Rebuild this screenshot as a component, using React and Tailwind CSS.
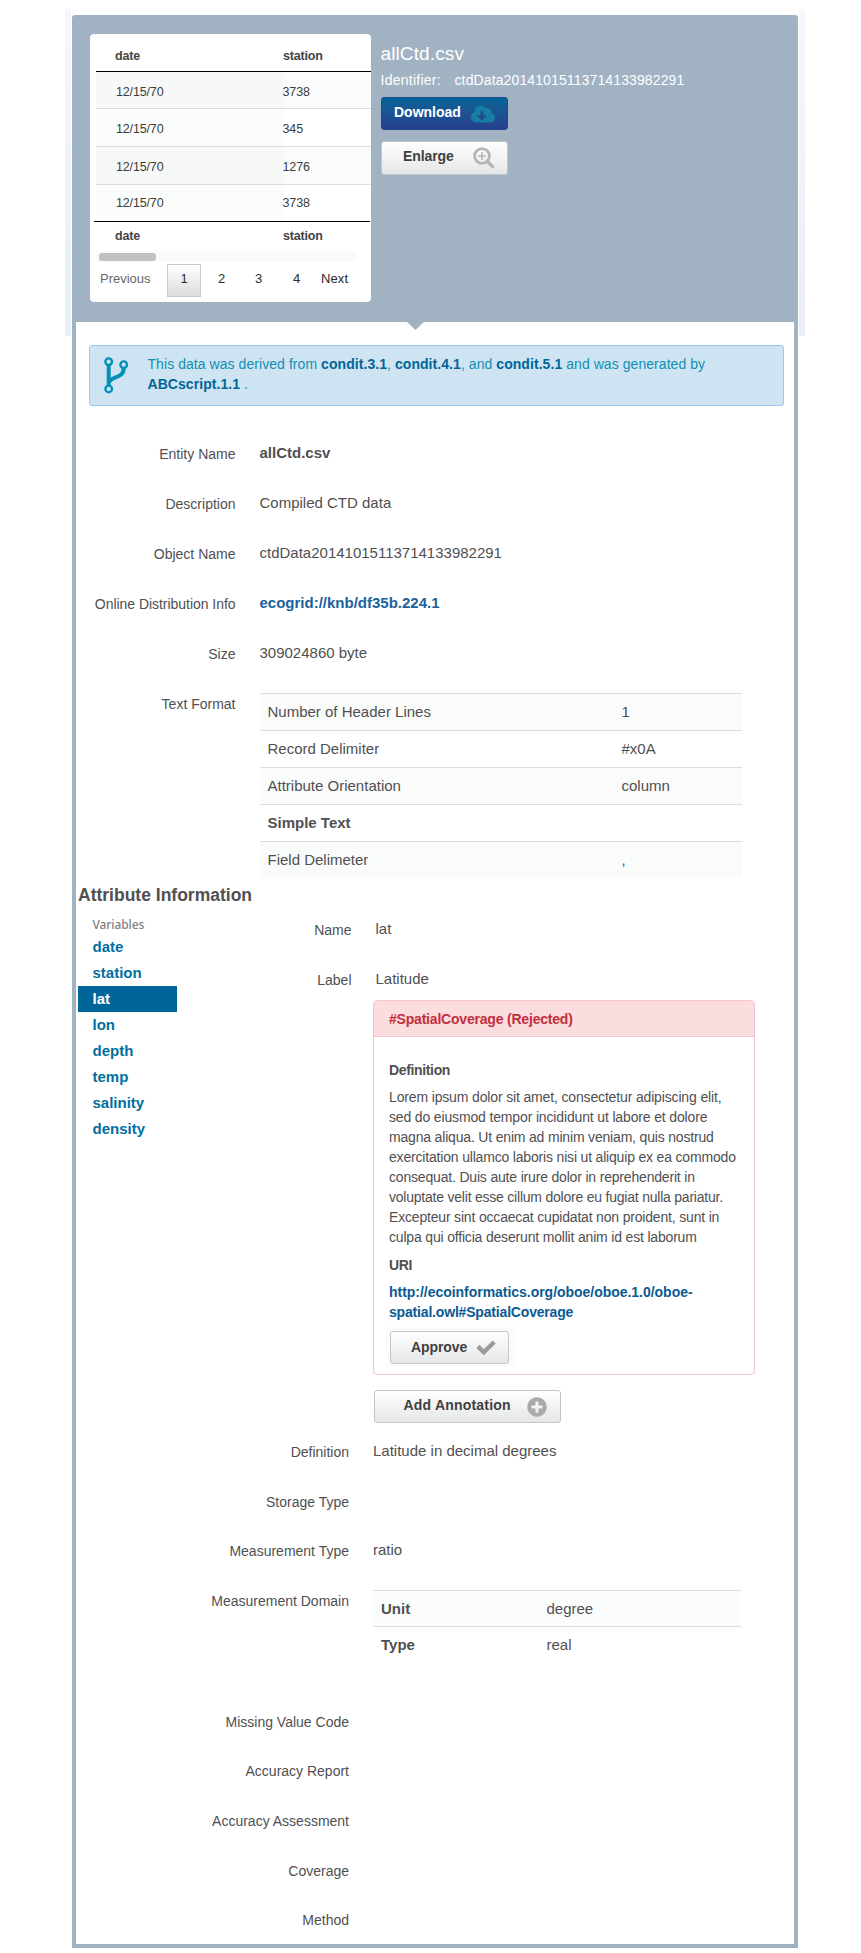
import React from "react";
import { FaCloudDownloadAlt, FaPlusCircle } from "react-icons/fa";

const previewRows = [
  ["12/15/70", "3738"],
  ["12/15/70", "345"],
  ["12/15/70", "1276"],
  ["12/15/70", "3738"],
];

const formatRows = [
  ["Number of Header Lines", "1"],
  ["Record Delimiter", "#x0A"],
  ["Attribute Orientation", "column"],
  ["Simple Text", ""],
  ["Field Delimeter", ","],
];

const variables = ["date", "station", "lat", "lon", "depth", "temp", "salinity", "density"];

function BranchIcon() {
  return (
    <svg className="mt-[11px] ml-[14px] h-[38px] w-[26px] shrink-0" viewBox="0 0 26 38" fill="none" stroke="#0590b5">
      <circle cx="4.7" cy="4.7" r="3.3" strokeWidth="2.4" />
      <circle cx="19.7" cy="7.7" r="3.3" strokeWidth="2.4" />
      <circle cx="4.7" cy="31.9" r="3.3" strokeWidth="2.4" />
      <path d="M4.7 8.3V28.3" strokeWidth="4" />
      <path d="M19.7 11.2C19.7 21.5 8 19 5 25" strokeWidth="4" />
    </svg>
  );
}

function ZoomIcon() {
  return (
    <svg className="h-[22px] w-[22px]" viewBox="0 0 22 22" fill="none" stroke="#b4b6b6">
      <circle cx="9" cy="9" r="7.4" strokeWidth="2.8" />
      <path d="M14.3 14.3L19.6 19.6" strokeWidth="3.4" strokeLinecap="round" />
      <path d="M9 5V13M5 9H13" strokeWidth="1.6" />
    </svg>
  );
}

function CheckIcon() {
  return (
    <svg className="h-[16px] w-[20px]" viewBox="0 0 20 16" fill="none" stroke="#999b9b" strokeWidth="4.4">
      <path d="M1.9 6.4L7.8 12.2L18.2 2" />
    </svg>
  );
}

function Row({ label, labelClass = "w-[159.5px] mr-[24px]", height = "h-[50px]", children }) {
  return (
    <div className={`flex items-start ${height}`}>
      <div className={`mt-px shrink-0 text-right text-[14px] leading-5 ${labelClass}`}>{label}</div>
      <div className="text-[15px] leading-5">{children}</div>
    </div>
  );
}

function DetailRow(props) {
  return <Row labelClass="w-[172px] mr-[24px]" {...props} />;
}

const greyButton =
  "flex items-center rounded-[3px] border border-[#c4c6c6] bg-linear-to-b from-white to-[#e5e6e7] text-left text-[14px] font-bold text-[#3f3f3f]";

function Preview() {
  return (
    <div className="h-[268px] w-[281px] overflow-hidden rounded-[4px] bg-white pt-[8px] pl-[6px] text-[12.5px] text-[#444]">
      <div className="flex h-[29px] leading-[28px] font-bold">
        <div className="w-[187px] pl-[19px] tracking-[-0.15px]">date</div>
        <div className="tracking-[-0.2px]">station</div>
      </div>
      <div className="border-t border-black">
        {previewRows.map(([date, station], i) => (
          <div
            key={i}
            className={`flex text-[#3c3c3c] ${i === 3 ? "h-[36px] leading-[37px]" : i === 0 ? "h-[37px] border-b border-[#ddd] leading-[40px]" : "h-[38px] border-b border-[#ddd] leading-[40px]"} ${i % 2 ? "" : "bg-[#fafcfb]"}`}
          >
            <div className={`w-[187px] pl-[20px] tracking-[-0.15px] ${i % 2 ? "bg-[#fbfdfc]" : "bg-[#f7f9f8]"}`}>{date}</div>
            <div className="-ml-[0.5px] tracking-[-0.1px]">{station}</div>
          </div>
        ))}
      </div>
      <div className="-ml-[2px] mr-px flex h-[30px] border-t border-black leading-[28px] font-bold">
        <div className="w-[189px] pl-[21px] tracking-[-0.15px]">date</div>
        <div className="tracking-[-0.2px]">station</div>
      </div>
      <div className="mr-[14px] h-[11px] bg-[#fafafa] pt-[2px] pl-[3px]">
        <div className="h-[8px] w-[57px] rounded-[3px] bg-[#c1c1c1]" />
      </div>
      <div className="mt-[2px] flex h-[33px] text-[13px] leading-[30px] text-[#2b2b2b]">
        <div className="w-[71px] pl-[4px] text-[#666]">Previous</div>
        <div className="w-[34px] border border-[#cacaca] bg-linear-to-b from-white to-[#dcdcdc] text-center leading-[28px]">1</div>
        <div className="ml-[17px] w-[37px]">2</div>
        <div className="w-[38px]">3</div>
        <div className="w-[28px]">4</div>
        <div className="tracking-[0.1px]">Next</div>
      </div>
    </div>
  );
}

function Header() {
  return (
    <header className="flex h-[307px] w-[726px] rounded-t-[3px] bg-[#a1b3c3] pt-[19px] pl-[18px]">
      <Preview />
      <div className="ml-[10px] text-white">
        <h1 className="mt-[8px] -ml-[0.5px] text-[19px] leading-6 tracking-[0.12px]">allCtd.csv</h1>
        <div className="mt-[4px] -ml-[0.5px] flex text-[14px] leading-5">
          <span className="w-[74px] tracking-[0.25px]">Identifier:</span>
          <span className="tracking-[0.12px]">ctdData20141015113714133982291</span>
        </div>
        <button className="mt-[7px] flex h-[33px] w-[127px] items-center rounded-[3px] border border-[#1e4689] bg-linear-to-b from-[#006498] to-[#263f8c] pl-[12px] text-left text-[14px] font-bold">
          <span className="-mt-[2px] w-[77px]">Download</span>
          <FaCloudDownloadAlt className="h-[22px] w-[24px] text-[#177fa3]" />
        </button>
        <button className={`${greyButton} mt-[11px] h-[34px] w-[127px] pl-[21px]`}>
          <span className="-mt-[3px] w-[70px] tracking-[-0.1px]">Enlarge</span>
          <ZoomIcon />
        </button>
      </div>
    </header>
  );
}

function Annotation() {
  return (
    <section className="h-[375px] w-[382px] overflow-hidden rounded-[4px] border border-[#f5c6cf]">
      <h3 className="h-[36px] border-b border-[#f5c6cf] bg-[#fbdcdf] pl-[15px] text-[14px] leading-[36px] font-bold tracking-[-0.2px] text-[#c22f3c]">
        #SpatialCoverage (Rejected)
      </h3>
      <div className="pt-[23px] pl-[15px] text-[14px] leading-5 text-[#505052]">
        <h4 className="font-bold tracking-[-0.35px]">Definition</h4>
        <p className="mt-[7px] tracking-[-0.18px] whitespace-nowrap">
          <span className="tracking-[-0.15px]">Lorem ipsum dolor sit amet, consectetur adipiscing elit,</span>
          <br />
          <span className="tracking-[-0.15px]">sed do eiusmod tempor incididunt ut labore et dolore</span>
          <br />
          magna aliqua. Ut enim ad minim veniam, quis nostrud<br />
          exercitation ullamco laboris nisi ut aliquip ex ea commodo<br />
          consequat. Duis aute irure dolor in reprehenderit in<br />
          <span className="tracking-[-0.22px]">voluptate velit esse cillum dolore eu fugiat nulla pariatur.</span>
          <br />
          Excepteur sint occaecat cupidatat non proident, sunt in<br />
          culpa qui officia deserunt mollit anim id est laborum
        </p>
        <h4 className="mt-[8px] font-bold tracking-[-0.3px]">URI</h4>
        <a className="mt-[7px] block font-bold tracking-[-0.03px] text-[#0b5a92]">
          http://ecoinformatics.org/oboe/oboe.1.0/oboe-
          <br />
          <span className="tracking-[-0.18px]">spatial.owl#SpatialCoverage</span>
        </a>
        <div className="mt-[5px] -ml-[3px] h-[40px] w-[129px] bg-[#fafcfb] pt-[4px] pl-[4px]">
          <button className={`${greyButton} h-[33px] w-[119px] pl-[20px]`}>
            <span className="-mt-[2px] w-[65px] tracking-[-0.1px]">Approve</span>
            <CheckIcon />
          </button>
        </div>
      </div>
    </section>
  );
}

export default function App() {
  return (
    <div className="flex h-[1953px] w-[861px] items-start bg-white pt-[9px] pl-[65px] font-['Liberation_Sans',Arial,sans-serif] text-[#505052]">
      <div className="mr-px h-[327px] w-[6px] shrink-0 bg-linear-to-b from-[#f4f8fc] to-[#e9eef4]" />
      <main className="mt-[6px] h-[1933px] w-[726px] shrink-0">
        <Header />
        <div className="h-[1626px] w-[726px] border-x-4 border-b-4 border-[#a1b3c3]">
          <div className="flex h-[23px] justify-center">
            <svg className="mr-[40px] h-[8px] w-[17px]" viewBox="0 0 17 8">
              <path d="M0 0H17L8.5 8Z" fill="#a1b3c3" />
            </svg>
          </div>
          <div className="ml-[13px] flex h-[61px] w-[695px] rounded-[3px] border border-[#9dc8eb] bg-[#cfe4f2] text-[14px] leading-5 tracking-[0.06px] text-[#0f90b3]">
            <BranchIcon />
            <p className="mt-[8px] ml-[17.5px]">
              This data was derived from <b className="text-[#006699]">condit.3.1</b>, <b className="text-[#006699]">condit.4.1</b>, and{" "}
              <b className="text-[#006699]">condit.5.1</b> and was generated by
              <br />
              <b className="text-[#006699]">ABCscript.1.1</b> .
            </p>
          </div>

          <div className="mt-[37px]">
            <Row label="Entity Name"><b>allCtd.csv</b></Row>
            <Row label="Description">Compiled CTD data</Row>
            <Row label="Object Name">ctdData20141015113714133982291</Row>
            <Row label={<span className="tracking-[-0.04px]">Online Distribution Info</span>}>
              <b className="text-[#1b629d]">ecogrid://knb/df35b.224.1</b>
            </Row>
            <Row label="Size">309024860 byte</Row>
            <Row label="Text Format" height="h-[185px]">
              <div className="ml-[0.5px] w-[482px]">
                {formatRows.map(([name, value], i) => (
                  <div key={name} className={`flex h-[37px] border-t border-[#ddd] pl-[7.5px] leading-[36px] ${i % 2 ? "" : "bg-[#fafcfb]"} ${i === 3 ? "font-bold" : ""}`}>
                    <div className="w-[354px]">{name}</div>
                    <div>{value}</div>
                  </div>
                ))}
              </div>
            </Row>
          </div>

          <h2 className="mt-[5px] ml-[2px] h-[25px] text-[17.5px] leading-6 font-bold">Attribute Information</h2>
          <div className="flex">
            <nav className="ml-[2px] w-[99px] pt-[7px] text-[15px] font-bold text-[#006f9f]">
              <div className="h-[19px] pl-[14.5px] font-['Noto_Sans',sans-serif] text-[12px] leading-[20px] font-medium tracking-[-0.1px] text-[#808080]">Variables</div>
              {variables.map((name) => (
                <div key={name} className={`h-[26px] pl-[14.5px] leading-[26px] ${name === "lat" ? "bg-[#006699] text-white" : ""}`}>
                  {name}
                </div>
              ))}
            </nav>
            <div className="pt-[11px]">
              <Row label="Name" labelClass="w-[174.5px] mr-[24px]">lat</Row>
              <Row label="Label" labelClass="w-[174.5px] mr-[24px]" height="h-[31px]">Latitude</Row>
              <div className="ml-[196px]">
                <Annotation />
                <button className={`${greyButton} mt-[15px] ml-px h-[33px] w-[187px] pl-[28.5px]`}>
                  <span className="-mt-[2px] w-[123.5px] tracking-[0.2px]">Add Annotation</span>
                  <FaPlusCircle className="h-[20px] w-[20px] text-[#a9abab]" />
                </button>
              </div>
              <div className="mt-[18px]">
                <DetailRow label="Definition">Latitude in decimal degrees</DetailRow>
                <DetailRow label="Storage Type" height="h-[49px]" />
                <DetailRow label="Measurement Type">ratio</DetailRow>
                <DetailRow label="Measurement Domain" height="h-[121px]">
                  <div className="w-[368px] leading-[35px]">
                    <div className="flex h-[36px] border-t border-[#ddd] bg-[#fbfdfc] pl-[8px]">
                      <b className="w-[165.5px]">Unit</b>degree
                    </div>
                    <div className="flex h-[36px] border-t border-[#ddd] pl-[8px]">
                      <b className="w-[165.5px]">Type</b>real
                    </div>
                  </div>
                </DetailRow>
                <DetailRow label="Missing Value Code" height="h-[49px]" />
                <DetailRow label="Accuracy Report" />
                <DetailRow label="Accuracy Assessment" />
                <DetailRow label="Coverage" height="h-[49px]" />
                <DetailRow label="Method" height="h-[20px]" />
              </div>
            </div>
          </div>
        </div>
      </main>
      <div className="ml-px h-[327px] w-[6px] shrink-0 bg-linear-to-b from-[#f4f8fc] to-[#e9eef4]" />
    </div>
  );
}
